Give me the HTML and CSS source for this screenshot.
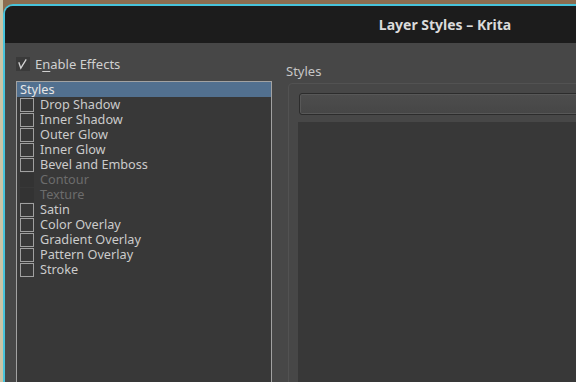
FILE: index.html
```html
<!DOCTYPE html>
<html lang="en">

<head>
    <meta charset="UTF-8">
    <meta name="viewport" content="width=device-width, initial-scale=1.0">
    <title>Layer Styles – Krita</title>

    <link rel="stylesheet" href="styles.css">
</head>

<body>
    <div class="window">
        <div class="titlebar">Layer Styles – Krita</div>

        <div class="content">
            <div class="leftPane">
                <div class="enableRow">
                    <span class="enableBox">
                        <svg width="14" height="14" viewBox="0 0 14 14">
                            <polyline points="2.8,5.2 4.8,11.2 10.2,2.4" fill="none" stroke="#d2d2d2" stroke-width="1.3" />
                        </svg>
                    </span>
                    <span class="enableText">E<u>n</u>able Effects</span>
                </div>

                <div class="styleList">
                    <div class="listRow selected">Styles</div>
                    <div class="listRow"><span class="box"></span>Drop Shadow</div>
                    <div class="listRow"><span class="box"></span>Inner Shadow</div>
                    <div class="listRow"><span class="box"></span>Outer Glow</div>
                    <div class="listRow"><span class="box"></span>Inner Glow</div>
                    <div class="listRow"><span class="box"></span>Bevel and Emboss</div>
                    <div class="listRow disabled"><span class="box"></span>Contour</div>
                    <div class="listRow disabled"><span class="box"></span>Texture</div>
                    <div class="listRow"><span class="box"></span>Satin</div>
                    <div class="listRow"><span class="box"></span>Color Overlay</div>
                    <div class="listRow"><span class="box"></span>Gradient Overlay</div>
                    <div class="listRow"><span class="box"></span>Pattern Overlay</div>
                    <div class="listRow"><span class="box"></span>Stroke</div>
                </div>
            </div>

            <div class="rightPane">
                <div class="paneLabel">Styles</div>
                <div class="groupBox">
                    <div class="comboBox"></div>
                    <div class="preview"></div>
                </div>
            </div>
        </div>
    </div>
</body>

</html>
```

FILE: styles.css
```css
* {
    box-sizing: border-box;
}

body {
    margin: 0;
    height: 382px;
    overflow: hidden;
    background: linear-gradient(to right, #c9c3a6 0, #c9c3a6 3px, #8b6d50 3px);
    font-family: "Noto Sans", "Open Sans", sans-serif;
    color: #cfcfcf;
}

.window {
    margin: 4px 0 0 3px;
    width: 884px;
    height: 400px;
    border: 2px solid #48c3da;
    border-bottom: none;
    border-radius: 10px 10px 0 0;
    background-color: #474747;
    overflow: hidden;
}

.titlebar {
    height: 37px;
    background-color: #1c1c1c;
    color: #dadada;
    font-size: 14px;
    font-weight: 700;
    text-align: center;
    line-height: 38px;
}

.content {
    display: flex;
    padding: 14px 0 0 11px;
}

.leftPane {
    width: 256px;
    flex-shrink: 0;
}

.enableRow {
    display: flex;
    align-items: center;
    height: 14px;
    margin-bottom: 10px;
}

.enableBox {
    width: 14px;
    height: 14px;
    background-color: #3a3a3a;
    display: block;
}

.enableBox svg {
    display: block;
}

.enableText {
    margin-left: 5px;
    font-size: 13px;
    line-height: 14px;
    color: #d0d0d0;
}

.enableText u {
    text-underline-offset: 2px;
}

.styleList {
    height: 320px;
    border: 1px solid #a2a2a2;
    background-color: #383838;
}

.listRow {
    display: flex;
    align-items: center;
    height: 15px;
    font-size: 12.7px;
    line-height: 15px;
    color: #cbcbcb;
    padding-left: 3px;
}

.listRow.selected {
    background-color: #52708f;
    color: #e6e6e6;
}

.box {
    width: 14px;
    height: 14px;
    margin-top: 1px;
    margin-right: 6px;
    border: 1px solid #a0a0a0;
}

.listRow.disabled {
    color: #6c6c6c;
}

.listRow.disabled .box {
    border: none;
    background-color: #333333;
}

.rightPane {
    margin-left: 14px;
    flex: 1;
}

.paneLabel {
    margin-top: 6px;
    font-size: 13px;
    line-height: 16px;
    color: #c6c6c6;
}

.groupBox {
    margin: 4px 0 0 2px;
    height: 320px;
    border: 1px solid #525252;
    border-radius: 4px;
    padding: 9px 0 0 9px;
}

.comboBox {
    margin-left: 1px;
    height: 22px;
    border: 1px solid #2c2c2c;
    border-radius: 3px;
    background: linear-gradient(#4d4d4d, #464646);
    box-shadow: inset 0 0 0 1px #585858;
}

.preview {
    margin-top: 7px;
    height: 280px;
    background-color: #383838;
}
```
